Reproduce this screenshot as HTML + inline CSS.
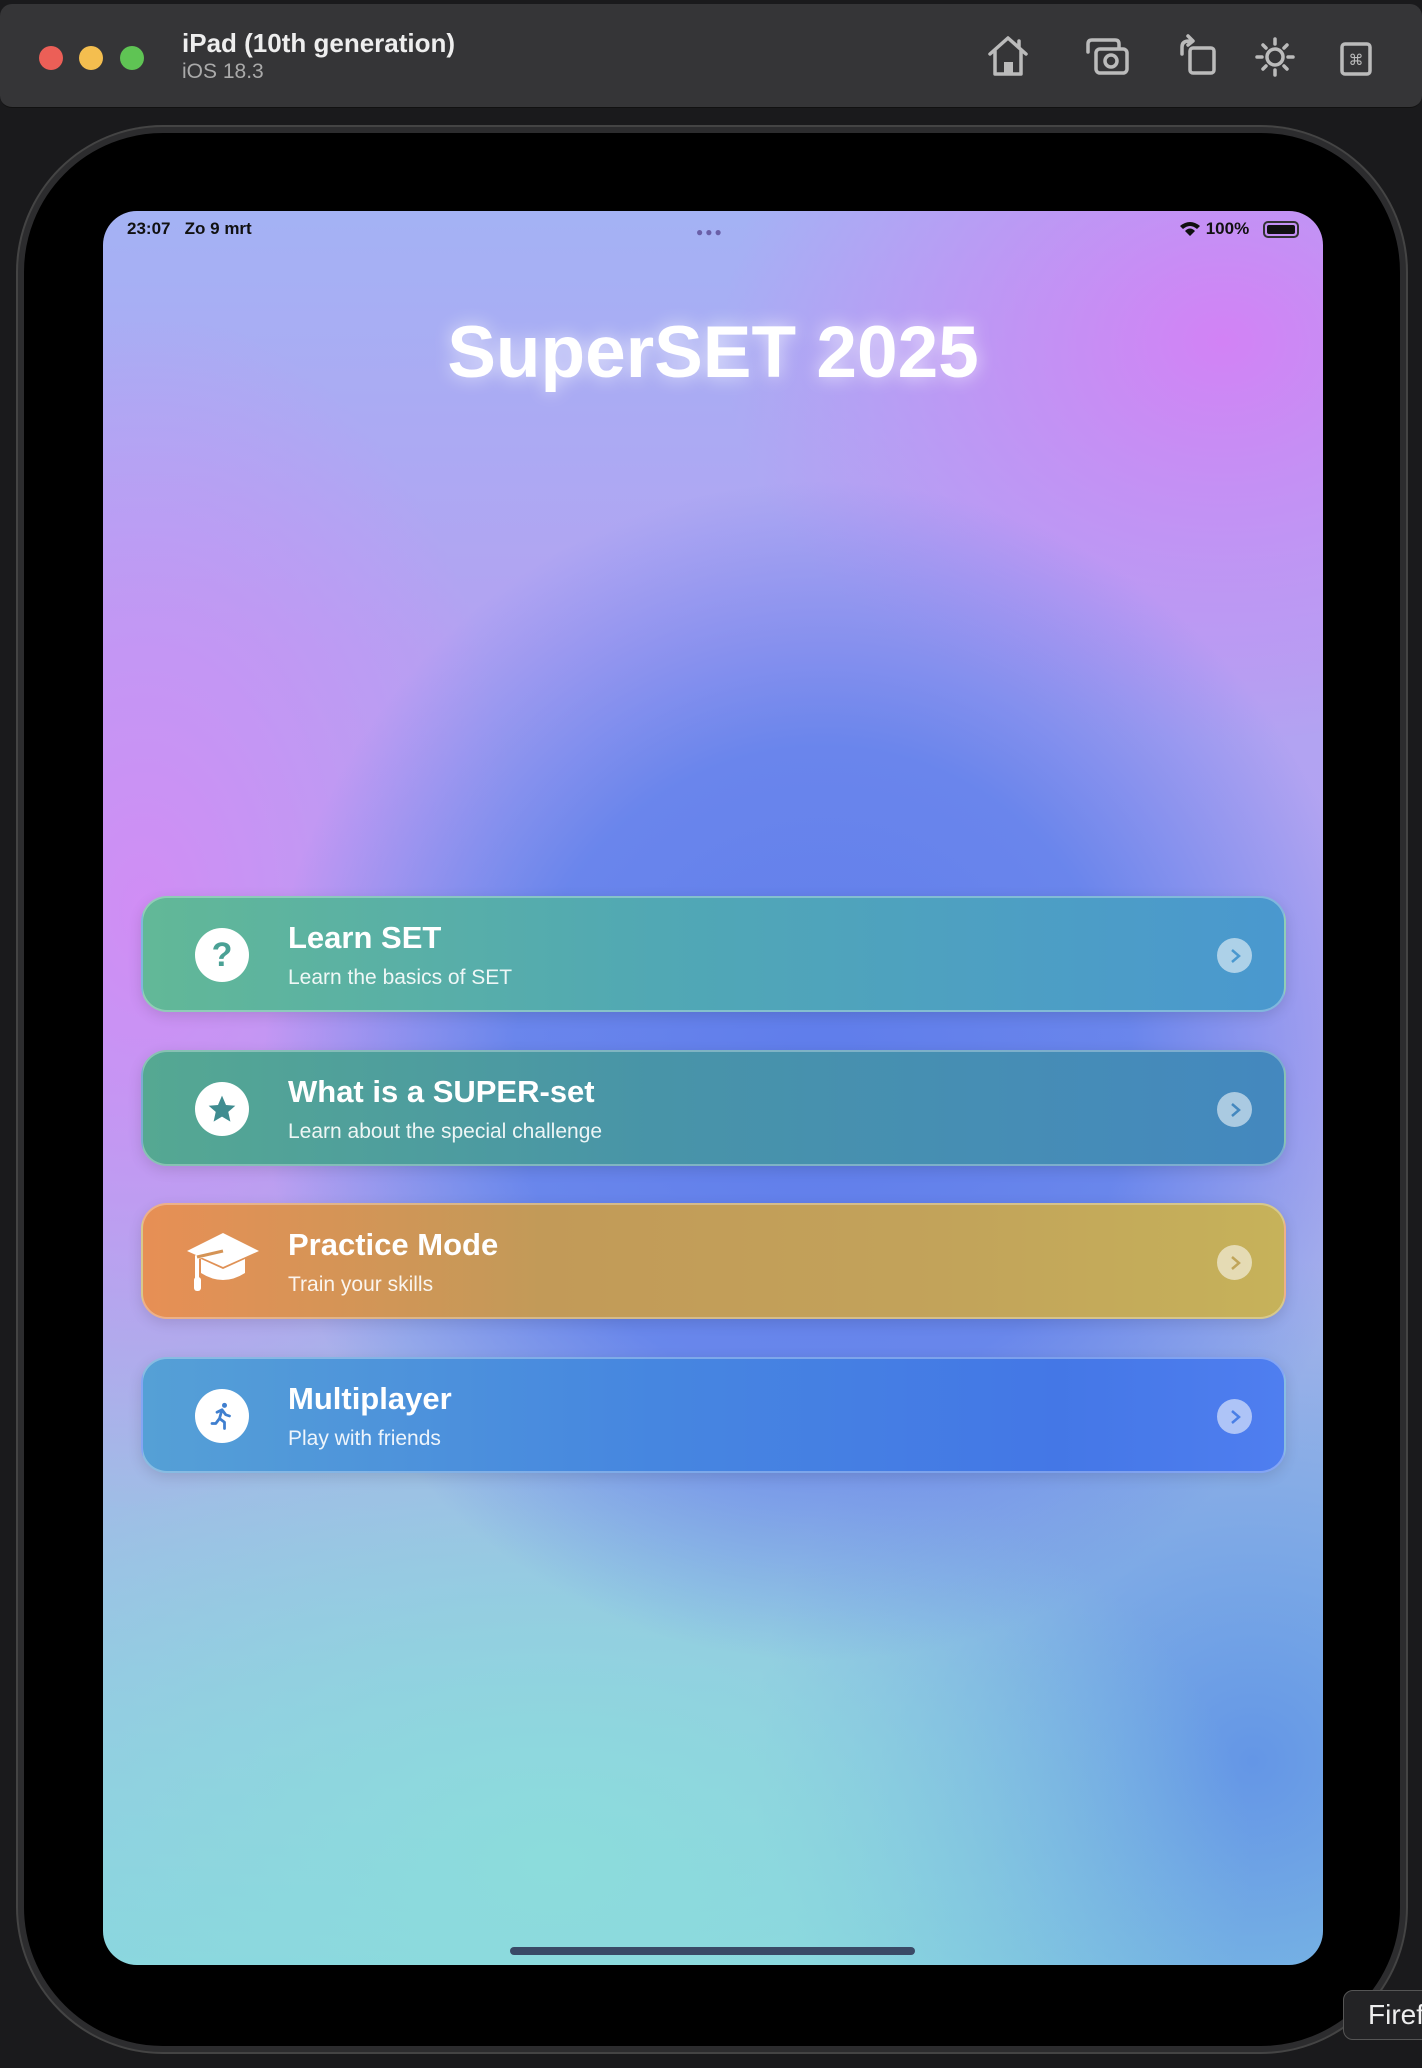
<!DOCTYPE html>
<html><head><meta charset="utf-8"><style>
*{margin:0;padding:0;box-sizing:border-box}
body{width:1422px;height:2068px;background:#1a1a1c;position:relative;overflow:hidden;font-family:"Liberation Sans",sans-serif}
.toolbar{position:absolute;left:0;top:4px;width:1422px;height:104px;background:#353537;border-radius:12px;border-bottom:1px solid #111}
.dot{position:absolute;top:42px;width:24px;height:24px;border-radius:50%}
.frame{position:absolute;left:18px;top:127px;width:1388px;height:1925px;border-radius:145px;background:#000;border:6px solid #2c2c2e;box-shadow:0 0 0 2px #444}
.screen{position:absolute;left:103px;top:211px;width:1220px;height:1754px;border-radius:34px;overflow:hidden;
background:
radial-gradient(ellipse 560px 590px at 720px 860px,rgba(95,125,235,1) 0%,rgba(98,130,235,.9) 55%,rgba(100,135,235,0) 100%),
radial-gradient(ellipse 500px 400px at 1120px 130px,rgba(210,130,245,1) 0%,rgba(205,135,245,0) 100%),
radial-gradient(ellipse 380px 600px at 40px 700px,rgba(210,140,245,.95) 0%,rgba(210,140,245,0) 100%),
radial-gradient(ellipse 700px 450px at 450px 1650px,rgba(140,220,220,1) 0%,rgba(140,220,220,0) 100%),
radial-gradient(ellipse 500px 500px at 1150px 1550px,rgba(100,150,230,1) 0%,rgba(100,150,230,0) 100%),
linear-gradient(180deg,#a4b2f4 0%,#b3a2f2 25%,#b0a6f0 50%,#a0bce6 72%,#8ad4e0 100%)}
.sb{position:absolute;top:8px;font-size:17px;color:#111;font-weight:600}
.title{position:absolute;top:100px;left:0;width:1220px;text-align:center;color:#fff;font-size:73px;font-weight:700;text-shadow:0 0 18px rgba(255,255,255,.7)}
.card{position:absolute;left:38px;width:1145px;height:116px;border-radius:26px;border:2px solid rgba(255,255,255,.3);box-shadow:0 4px 14px rgba(0,0,0,.12)}
.ic{position:absolute;left:52px;top:30px;width:54px;height:54px;border-radius:50%;background:#fff;display:flex;align-items:center;justify-content:center}
.t1{position:absolute;left:145px;top:22px;color:#fff;font-size:31px;font-weight:700}
.t2{position:absolute;left:145px;top:68px;color:rgba(255,255,255,.9);font-size:21px}
.chev{position:absolute;right:32px;top:40px;width:35px;height:35px;border-radius:50%;background:rgba(255,255,255,.55);display:flex;align-items:center;justify-content:center}
</style></head><body>
<div class="toolbar">
 <div class="dot" style="left:39px;background:#ec5f57"></div>
 <div class="dot" style="left:79px;background:#f4be4f"></div>
 <div class="dot" style="left:120px;background:#5fc454"></div>
 <div style="position:absolute;left:182px;top:24px;color:#eee;font-size:26px;font-weight:700">iPad (10th generation)</div>
 <div style="position:absolute;left:182px;top:56px;color:#aaa;font-size:21px">iOS 18.3</div>
 <svg style="position:absolute;left:980px;top:28px" width="400" height="50" fill="none" stroke="#bbb" stroke-width="3.5" stroke-linecap="round" stroke-linejoin="round">
  <path d="M10 22 L28 6 L46 22 M15 18 V42 H41 V18 M39 9 V15"/><rect x="24" y="30" width="9" height="12" fill="#bbb" stroke="none"/>
  <path d="M108 20 V12 Q108 8 112 8 H135 Q139 8 139 12 V16"/><rect x="116" y="17" width="31" height="24" rx="4"/><circle cx="131" cy="29" r="6"/>
  <rect x="210" y="16" width="24" height="25" rx="3"/><path d="M202 22 V15 Q202 9 209 9 H212 M208 4 L213 9 L208 13"/>
  <circle cx="295" cy="25" r="8"/><path d="M295 7v5M295 38v5M277 25h5M308 25h5M283 13l3 3M307 13l-3 3M283 37l3-3M307 37l-3-3"/>
  <rect x="362" y="12" width="28" height="30" rx="3"/><text x="376" y="33" font-size="15" fill="#bbb" stroke="none" text-anchor="middle" font-family="DejaVu Sans">⌘</text>
 </svg>
</div>
<div class="frame"></div>
<div class="screen">
 <div class="sb" style="left:24px">23:07&nbsp;&nbsp;&nbsp;Zo 9 mrt</div>
 <div style="position:absolute;left:593px;top:14px;color:#6a5fa8;font-size:12px;letter-spacing:2px">●●●</div>
 <div class="sb" style="left:1076px">
  <svg width="22" height="16" viewBox="0 0 22 16" style="vertical-align:-2px"><path d="M1 6 Q11 -2 21 6 L18 9 Q11 3 4 9Z M6 11 Q11 6 16 11 L11 16Z" fill="#111"/></svg> 100%</div>
 <div style="position:absolute;left:1160px;top:10px;width:36px;height:17px;border:2px solid #333;border-radius:5px;padding:2px"><div style="width:100%;height:100%;background:#111;border-radius:2px"></div></div>
 <div class="title">SuperSET 2025</div>

 <div class="card" style="top:685px;background:linear-gradient(90deg,#62b897,#51a8b4 45%,#4a98cf)">
  <div class="ic"><span style="color:#4aa195;font-size:34px;font-weight:700">?</span></div>
  <div class="t1">Learn SET</div><div class="t2">Learn the basics of SET</div>
  <div class="chev"><svg width="14" height="18"><path d="M4 3l7 6-7 6" stroke="#4a98cf" stroke-width="2.5" fill="none"/></svg></div>
 </div>
 <div class="card" style="top:839px;background:linear-gradient(90deg,#55a892,#4894a8 45%,#4488bf)">
  <div class="ic"><svg width="32" height="32" viewBox="0 0 24 24"><path d="M12 2l3 7 7 .6-5.3 4.6 1.6 7.3L12 17.7 5.7 21.5l1.6-7.3L2 9.6 9 9z" fill="#3f8c90"/></svg></div>
  <div class="t1">What is a SUPER-set</div><div class="t2">Learn about the special challenge</div>
  <div class="chev"><svg width="14" height="18"><path d="M4 3l7 6-7 6" stroke="#4488bf" stroke-width="2.5" fill="none"/></svg></div>
 </div>
 <div class="card" style="top:992px;background:linear-gradient(90deg,#e78f55,#c29a58 35%,#c2a35a 70%,#c6b25a)">
  <svg style="position:absolute;left:42px;top:26px" width="76" height="66" viewBox="0 0 76 66"><path d="M38 2 L74 20 L38 36 L2 20Z" fill="#fff"/><path d="M16 28 V42 Q38 56 60 42 V28 L38 38Z" fill="#fff"/><path d="M38 20 L12 26 V48" stroke="#fff" stroke-width="4" fill="none"/><rect x="9" y="46" width="7" height="14" rx="3" fill="#fff"/><path d="M38 20 L12 26" stroke="#d59456" stroke-width="3"/></svg>
  <div class="t1">Practice Mode</div><div class="t2">Train your skills</div>
  <div class="chev"><svg width="14" height="18"><path d="M4 3l7 6-7 6" stroke="#c0a55a" stroke-width="2.5" fill="none"/></svg></div>
 </div>
 <div class="card" style="top:1146px;background:linear-gradient(90deg,#55a0d6,#4686e0 45%,#4477e6 80%,#4f7ef0)">
  <div class="ic"><svg width="30" height="30" viewBox="0 0 24 24" fill="none" stroke="#3f7fcf" stroke-width="2.2" stroke-linecap="round" stroke-linejoin="round"><circle cx="14" cy="3.5" r="2" fill="#3f7fcf" stroke="none"/><path d="M8 9l4-2 3 4 3 1M12 7l-2 7 4 3v5M10 14l-3 4H4"/></svg></div>
  <div class="t1">Multiplayer</div><div class="t2">Play with friends</div>
  <div class="chev"><svg width="14" height="18"><path d="M4 3l7 6-7 6" stroke="#4a7fe6" stroke-width="2.5" fill="none"/></svg></div>
 </div>
 <div style="position:absolute;left:407px;top:1736px;width:405px;height:8px;border-radius:4px;background:#3a4a66"></div>
</div>
<div style="position:absolute;left:1343px;top:1990px;width:100px;height:50px;background:#232325;border:1px solid #555;border-radius:10px;color:#eee;font-size:28px;padding:8px 0 0 24px">Firef</div>
</body></html>
